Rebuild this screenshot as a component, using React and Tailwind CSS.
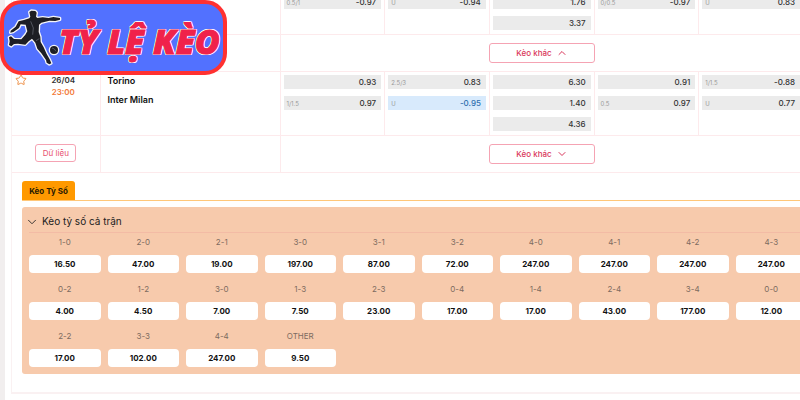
import React from "react"
import { ChevronDown, ChevronUp, Star } from "lucide-react"

// Each market column holds up to three [handicap, price] lines
const matches = [
	{
		id: 1,
		open: true,
		markets: [
			[["", ""], ["0.5/1", "-0.97"]],
			[["", ""], ["U", "-0.94"]],
			[["", ""], ["", "1.76"], ["", "3.37"]],
			[["", ""], ["0/0.5", "-0.97"]],
			[["", ""], ["U", "0.83"]],
		],
	},
	{
		id: 2,
		date: "26/04",
		time: "23:00",
		home: "Torino",
		away: "Inter Milan",
		open: false,
		markets: [
			[["", "0.93"], ["1/1.5", "0.97"]],
			[["2.5/3", "0.83"], ["U", "-0.95", true]],
			[["", "6.30"], ["", "1.40"], ["", "4.36"]],
			[["", "0.91"], ["0.5", "0.97"]],
			[["1/1.5", "-0.88"], ["U", "0.77"]],
		],
	},
]

const scores = [
	["1-0", "16.50"],
	["2-0", "47.00"],
	["2-1", "19.00"],
	["3-0", "197.00"],
	["3-1", "87.00"],
	["3-2", "72.00"],
	["4-0", "247.00"],
	["4-1", "247.00"],
	["4-2", "247.00"],
	["4-3", "247.00"],
	["0-2", "4.00"],
	["1-2", "4.50"],
	["3-0", "7.00"],
	["1-3", "7.50"],
	["2-3", "23.00"],
	["0-4", "17.00"],
	["1-4", "17.00"],
	["2-4", "43.00"],
	["3-4", "177.00"],
	["0-0", "12.00"],
	["2-2", "17.00"],
	["3-3", "102.00"],
	["4-4", "247.00"],
	["OTHER", "9.50"],
]

function Logo() {
	return (
		<a
			href="#"
			className="absolute left-0 top-0 z-10 flex h-[75px] w-[227px] items-center rounded-[22px] border-4 border-[#ff3131] bg-[#5271ff]"
		>
			<svg
				viewBox="12 12 183 201"
				className="h-[67px] w-[61px] shrink-0"
				aria-hidden="true"
			>
				<g
					fill="#1d1e24"
					stroke="#f4f4f8"
					strokeWidth="8"
					strokeLinejoin="round"
					paintOrder="stroke"
				>
					<path d="M88 36 L94 32 L106 33 L110 38 L108 50 L112 54 L128 52 L146 54 L160 51 L180 54 L180 59 L166 63 L148 62 L124 68 L117 74 L116 96 L121 110 L122 126 L131 142 L140 162 L149 178 L154 190 L148 193 L140 188 L138 180 L124 160 L112 146 L106 128 L96 116 L86 124 L76 134 L54 131 L42 132 L34 139 L27 135 L29 124 L27 112 L33 109 L42 117 L64 118 L76 104 L82 94 L77 74 L62 73 L57 84 L40 96 L31 98 L32 92 L47 80 L56 64 L72 60 L88 55 L91 50 Z" />
					<circle cx="162" cy="150" r="12" />
				</g>
				<g fill="none" stroke="#6d707c" strokeWidth="2">
					<path d="M92 64 L100 84 L98 104" />
					<path d="M118 116 L108 122" />
					<path d="M156 144 L163 147 L168 154" />
				</g>
			</svg>
			<span className="-ml-1.5 whitespace-nowrap pt-1.5 font-['Open_Sans',sans-serif] text-[34px] font-extrabold italic leading-none text-[#f0224b] [-webkit-text-stroke:1px_#f0224b] [text-shadow:1px_0_#fff,-1px_0_#fff,0_1px_#fff,0_-1px_#fff,1px_1px_#fff,-1px_-1px_#fff,1px_-1px_#fff,-1px_1px_#fff]">
				TỶ LỆ KÈO
			</span>
		</a>
	)
}

function Odd({ handicap, price, active }) {
	return (
		<button
			type="button"
			className={`flex h-3.5 w-full items-center justify-between pl-[3px] pr-[5px] ${
				active ? "bg-[#d8eafc] text-[#2f6fae]" : "bg-[#ebebeb] text-[#333]"
			}`}
		>
			<span className="text-[6px] text-[#999]">{handicap}</span>
			<span className="text-[8px] font-medium">{price}</span>
		</button>
	)
}

function Match({ match }) {
	const Chevron = match.open ? ChevronUp : ChevronDown

	return (
		<>
			<tr className="border-b border-[#fdeaec]">
				<td className="p-0 align-top">
					{match.date && (
						<div className="flex items-start gap-1 pl-[3px] pt-0.5">
							<button type="button" aria-label="Yêu thích">
								<Star className="size-3 text-[#ef8f45]" strokeWidth={2} />
							</button>
							<div className="flex-1 pr-1 text-center text-[8px] font-semibold leading-3">
								<div className="text-[#333]">{match.date}</div>
								<div className="text-[#f37a3a]">{match.time}</div>
							</div>
						</div>
					)}
				</td>
				<td className="border-x border-[#fdeaec] px-[7px] pt-[3px] align-top text-[9px] font-semibold leading-3">
					<div className="mb-[7px]">{match.home}</div>
					<div>{match.away}</div>
				</td>
				{match.markets.map((lines, i) => (
					<td
						key={i}
						className="h-[63px] border-r border-[#fdeaec] px-[3px] pb-1 pt-[3px] align-top"
					>
						<div className="flex flex-col gap-[7px]">
							{lines.map(([handicap, price, active], j) => (
								<Odd
									key={j}
									handicap={handicap}
									price={price}
									active={active}
								/>
							))}
						</div>
					</td>
				))}
			</tr>
			<tr className="border-b border-[#fdeaec]">
				<td className="px-0 py-2 align-top">
					{match.date && (
						<button
							type="button"
							className="mx-auto block h-[18px] w-[41px] rounded-[3px] border border-[#f5a3b3] text-[8px] leading-4 text-[#e8506e]"
						>
							Dữ liệu
						</button>
					)}
				</td>
				<td className="border-x border-[#fdeaec] p-0" />
				<td colSpan={5} className="px-0 py-2">
					<button
						type="button"
						className="mx-auto flex h-5 w-[106px] items-center justify-center gap-1 rounded-[3px] border border-[#f5a3b3] text-[8px] font-medium text-[#d9365a]"
					>
						Kèo khác
						<Chevron className="size-3" strokeWidth={2} />
					</button>
				</td>
			</tr>
		</>
	)
}

function CorrectScore() {
	return (
		<section className="px-2.5 pb-[18px] pt-2">
			<div className="flex border-b border-[#ffc779]">
				<button
					type="button"
					className="h-[19px] w-[53px] rounded-t-[3px] bg-[#ff9900] text-[8px] font-bold text-[#2a1a00]"
				>
					Kèo Tỷ Số
				</button>
			</div>
			<div className="mt-1.5 rounded-[3px] bg-[#f7caac] px-[7px] pb-[7px]">
				<button
					type="button"
					className="flex h-[26px] w-full items-center border-b border-[#f3bba5] pt-1 text-[10px] text-[#222]"
				>
					<ChevronDown className="-ml-1 mr-[3px] size-3.5" strokeWidth={1.5} />
					Kèo tỷ số cả trận
				</button>
				<div className="grid grid-cols-10 gap-[7px]">
					{scores.map(([score, price], i) => (
						<label key={i} className="text-center">
							<span className="flex h-[22px] items-center justify-center pb-1 text-[8px] text-[#7d6a60]">
								{score}
							</span>
							<button
								type="button"
								className="block h-[18px] w-full rounded bg-white text-[8px] font-bold text-[#111]"
							>
								{price}
							</button>
						</label>
					))}
				</div>
			</div>
		</section>
	)
}

function App() {
	return (
		<div className="relative flex min-h-screen flex-col overflow-hidden bg-white font-[Inter,sans-serif] text-[#111]">
			<Logo />
			<div className="-mr-6 -mt-[29px] flex-1 border-l-[5px] border-[#f1eeee] pl-1.5">
				<main className="border-b-2 border-l border-[#faf1f2]">
					<table className="w-[calc(100%-20px)] table-fixed border-collapse">
						<colgroup>
							<col className="w-[88px]" />
							<col className="w-[180px]" />
							<col span={5} />
						</colgroup>
						<tbody>
							{matches.map((match) => (
								<Match key={match.id} match={match} />
							))}
						</tbody>
					</table>
					<CorrectScore />
				</main>
			</div>
		</div>
	)
}

export default App
